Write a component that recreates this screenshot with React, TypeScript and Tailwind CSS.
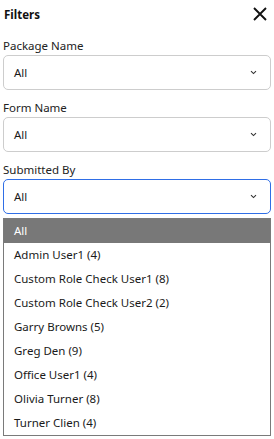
import React from "react";

const users = [
  "Admin User1 (4)",
  "Custom Role Check User1 (8)",
  "Custom Role Check User2 (2)",
  "Garry Browns (5)",
  "Greg Den (9)",
  "Office User1 (4)",
  "Olivia Turner (8)",
  "Turner Clien (4)",
];

function Chevron() {
  return (
    <svg width="7" height="5" viewBox="0 0 7 5" className="shrink-0">
      <path d="M1 1.2 L3.5 3.6 L6 1.2" fill="none" stroke="#333" strokeWidth="1.1" />
    </svg>
  );
}

function Select({ focused }: { focused?: boolean }) {
  return (
    <div
      className={`mt-[1px] h-[35px] flex items-center justify-between pl-[10px] pr-[13px] rounded-[5px] bg-white border ${
        focused ? "border-[#2f6ee6]" : "border-[#cdcdcd]"
      }`}
    >
      <span className="text-[11.5px] text-[#1a1a1a] mt-[1px]">All</span>
      <Chevron />
    </div>
  );
}

function Field({ label, focused }: { label: string; focused?: boolean }) {
  return (
    <div className="mt-[10px]">
      <div className="h-[16px] leading-[16px] text-[11.5px] text-[#222]">{label}</div>
      <Select focused={focused} />
    </div>
  );
}

export default function App() {
  return (
    <div
      className="w-[274px] h-[439px] bg-white px-[3px] overflow-hidden"
      style={{ fontFamily: '"Noto Sans", "Open Sans", sans-serif' }}
    >
      <div className="h-[28px] flex items-center justify-between pl-[1px] pr-[4px]">
        <span className="text-[11.5px] font-bold text-[#111] mt-[1px]">Filters</span>
        <svg width="14" height="14" viewBox="0 0 14 14">
          <path d="M1 1 L13 13 M13 1 L1 13" stroke="#111" strokeWidth="1.9" fill="none" />
        </svg>
      </div>
      <Field label="Package Name" />
      <Field label="Form Name" />
      <Field label="Submitted By" focused />
      <div className="mt-[4px] border border-[#7a7a7a] bg-white">
        <div className="h-[24px] flex items-center pl-[10px] bg-[#787878] text-white text-[11.5px]">All</div>
        {users.map((u) => (
          <div key={u} className="h-[24px] flex items-center pl-[10px] text-[11.5px] text-[#1a1a1a]">
            {u}
          </div>
        ))}
      </div>
    </div>
  );
}
